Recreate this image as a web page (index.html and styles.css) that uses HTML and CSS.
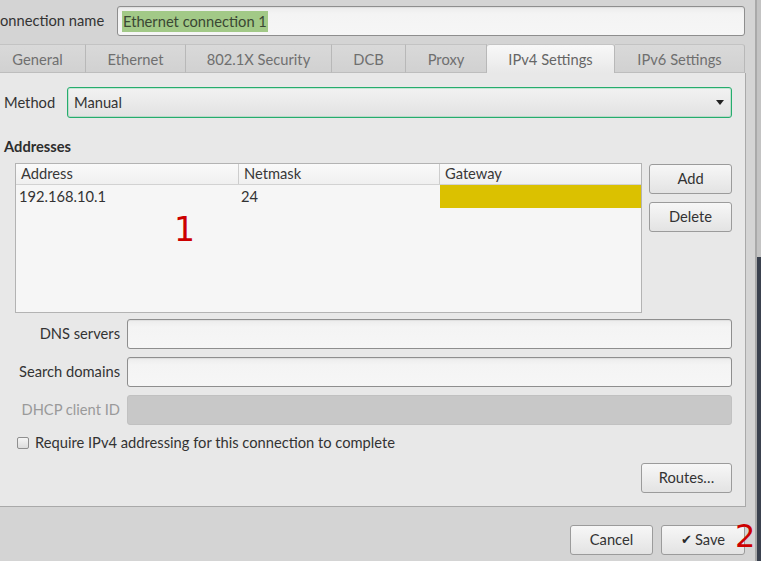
FILE: index.html
```html
<!DOCTYPE html>
<html>
<head>
<meta charset="utf-8">
<link rel="stylesheet" href="styles.css">
</head>
<body>
<div class="screen">
  <div class="dialog">
    <div class="name-row">
      <span class="name-label">onnection name</span>
      <div class="entry name-entry"><span class="sel">Ethernet connection 1</span></div>
    </div>
    <div class="tabs">
      <div class="tab t-general">General</div>
      <div class="tab t-ethernet">Ethernet</div>
      <div class="tab t-security">802.1X Security</div>
      <div class="tab t-dcb">DCB</div>
      <div class="tab t-proxy">Proxy</div>
      <div class="tab t-ipv4 active">IPv4 Settings</div>
      <div class="tab t-ipv6">IPv6 Settings</div>
    </div>
    <div class="panel">
      <div class="method-row">
        <span class="label">Method</span>
        <div class="combo"><span class="combo-text">Manual</span><span class="arrow"></span></div>
      </div>
      <div class="section">Addresses</div>
      <div class="addr-row">
        <div class="table">
          <div class="thead">
            <div class="th">Address</div>
            <div class="th sep">Netmask</div>
            <div class="th sep">Gateway</div>
          </div>
          <div class="trow">
            <div class="td">192.168.10.1</div>
            <div class="td">24</div>
            <div class="td gw"></div>
          </div>
          <span class="mark mark1">1</span>
        </div>
        <div class="side-buttons">
          <button class="btn side-btn">Add</button>
          <button class="btn side-btn">Delete</button>
        </div>
      </div>
      <div class="form-grid">
        <span class="form-label">DNS servers</span>
        <div class="entry"></div>
        <span class="form-label">Search domains</span>
        <div class="entry"></div>
        <span class="form-label disabled">DHCP client ID</span>
        <div class="entry entry-disabled"></div>
      </div>
      <div class="check-row">
        <span class="checkbox"></span>
        <span>Require IPv4 addressing for this connection to complete</span>
      </div>
      <div class="routes-row">
        <button class="btn routes-btn">Routes…</button>
      </div>
    </div>
    <div class="actions">
      <button class="btn cancel-btn">Cancel</button>
      <button class="btn save-btn"><span class="check">✔</span>Save</button>
      <span class="mark mark2">2</span>
    </div>
  </div>
  <div class="desktop"></div>
</div>
</body>
</html>
```
FILE: styles.css
```css
html, body {
  margin: 0;
  padding: 0;
}
body {
  width: 761px;
  height: 561px;
  overflow: hidden;
  background: #d4d4d4;
  font-family: Lato, "Open Sans", sans-serif;
  font-size: 14.7px;
  color: #333333;
}
.screen {
  display: flex;
  height: 561px;
}
.dialog {
  flex: none;
  width: 765px;
  margin-left: -10px;
  background: #d4d4d4;
  border-right: 2px solid #a9a9a9;
  display: flex;
  flex-direction: column;
}
.desktop {
  flex: 1;
  background: linear-gradient(#c3c3c3 0, #c3c3c3 257px, #3a414e 257px);
}

/* name row */
.name-row {
  display: grid;
  grid-template-columns: 117px 1fr;
  align-items: center;
  padding: 6px 10px 0 10px;
}
.name-label {
  color: #333;
  line-height: 20px;
  padding-bottom: 2px;
}
.entry {
  box-sizing: border-box;
  height: 30px;
  border: 1px solid #8e8e8e;
  border-radius: 3px;
  background: linear-gradient(#ececec, #f4f4f4 7px, #f6f6f6);
  box-shadow: inset 0 1px 1px rgba(0, 0, 0, 0.06);
}
.name-entry {
  display: flex;
  align-items: center;
  padding-left: 4px;
}
.sel {
  background: #a2c987;
  color: #3a4733;
  line-height: 20px;
  padding: 0 1px 1px;
}

/* tabs */
.tabs {
  display: flex;
  margin-top: 8px;
  height: 29px;
  width: 755px;
}
.tab {
  box-sizing: border-box;
  height: 29px;
  display: flex;
  align-items: center;
  justify-content: center;
  color: #6f6f6f;
  background: linear-gradient(#d9d9d9, #d1d1d1);
  border-top: 1px solid #c3c3c3;
  border-right: 1px solid #b8b8b8;
  border-bottom: 1px solid #bdbdbd;
}
.t-general { width: 96px; }
.t-ethernet { width: 100px; }
.t-security { width: 146px; }
.t-dcb { width: 74px; }
.t-proxy { width: 81px; }
.t-ipv4 { width: 128px; }
.t-ipv6 { width: 130px; border-top-right-radius: 3px; }
.tab.active {
  background: linear-gradient(#f8f8f8, #ededed 70%, #e8e8e8);
  border-top-color: #c4c4c4;
  border-bottom: none;
  border-radius: 3px 3px 0 0;
  padding-bottom: 1px;
  color: #666;
}

/* panel */
.panel {
  box-sizing: border-box;
  width: 756px;
  background: #e8e8e8;
  border-right: 1px solid #a9a9a9;
  border-bottom: 1px solid #a9a9a9;
  padding: 14px 13px 13px 14px;
}
.method-row {
  display: grid;
  grid-template-columns: 63px 1fr;
  align-items: center;
}
.label {
  line-height: 20px;
  padding-bottom: 1px;
}
.combo {
  box-sizing: border-box;
  height: 31px;
  display: flex;
  align-items: center;
  justify-content: space-between;
  padding: 0 7px 1px 6px;
  border: 1px solid #25ad6d;
  border-radius: 3px;
  background: linear-gradient(#f2f2f2, #e2e2e2);
  box-shadow: inset 0 0 0 1px rgba(40, 180, 110, 0.22);
}
.arrow {
  width: 0;
  height: 0;
  border-left: 4px solid transparent;
  border-right: 4px solid transparent;
  border-top: 5px solid #222;
}
.section {
  margin: 19px 0 6px;
  line-height: 19px;
  padding-bottom: 1px;
  font-weight: 700;
  color: #2d2d2d;
}
.addr-row {
  display: flex;
  gap: 7px;
  padding-left: 11px;
}
.table {
  position: relative;
  box-sizing: border-box;
  width: 627px;
  height: 150px;
  border: 1px solid #b3b3b3;
  background: #f6f6f6;
}
.thead, .trow {
  display: grid;
  grid-template-columns: 222px 201px 1fr;
}
.thead {
  height: 20px;
  background: linear-gradient(#fafafa, #f0f0f0);
  border-bottom: 1px solid #d2d2d2;
}
.th {
  line-height: 18px;
  padding-left: 5px;
  color: #383838;
}
.th.sep {
  border-left: 1px solid #cdcdcd;
}
.trow {
  height: 23px;
}
.td {
  line-height: 22px;
  padding-left: 3px;
  color: #333;
}
.gw {
  background: #dbc100;
  margin-left: 1px;
}
.mark {
  position: absolute;
  font-family: "DejaVu Sans", sans-serif;
  color: #cc0000;
}
.mark1 {
  left: 158px;
  top: 49px;
  font-size: 33px;
  line-height: 33px;
}
.side-buttons {
  display: flex;
  flex-direction: column;
  gap: 8px;
  margin-top: 1px;
}
.btn {
  box-sizing: border-box;
  height: 30px;
  padding: 0 0 2px;
  border: 1px solid #9b9b9b;
  border-radius: 3px;
  background: linear-gradient(#f7f7f7, #e3e3e3);
  font-family: inherit;
  font-size: 14.7px;
  color: #333;
}
.side-btn {
  width: 83px;
}
.form-grid {
  display: grid;
  grid-template-columns: 105px 1fr;
  column-gap: 7px;
  row-gap: 8px;
  align-items: center;
  margin-top: 6px;
  padding-left: 11px;
}
.form-label {
  text-align: right;
  line-height: 20px;
  padding-bottom: 2px;
}
.form-label.disabled {
  color: #9a9a9a;
}
.entry-disabled {
  background: #c8c8c8;
  border-color: #c1c1c1;
  box-shadow: none;
}
.check-row {
  display: flex;
  align-items: center;
  gap: 6px;
  height: 20px;
  margin-top: 8px;
  padding-left: 13px;
}
.check-row span:last-child {
  padding-bottom: 2px;
}
.checkbox {
  box-sizing: border-box;
  width: 12px;
  height: 12px;
  border: 1px solid #8f8f8f;
  border-radius: 2px;
  background: linear-gradient(#f5f5f5, #dcdcdc);
}
.routes-row {
  display: flex;
  justify-content: flex-end;
  margin-top: 10px;
}
.routes-btn {
  width: 91px;
}

/* actions */
.actions {
  position: relative;
  display: flex;
  justify-content: flex-end;
  gap: 8px;
  padding: 18px 10px 0 0;
}
.cancel-btn {
  width: 83px;
}
.save-btn {
  width: 84px;
  display: flex;
  align-items: center;
  justify-content: center;
  gap: 3px;
}
.check {
  font-family: "DejaVu Sans", sans-serif;
  font-size: 13px;
  font-weight: 700;
  color: #2a2a2a;
}
.mark2 {
  left: 745px;
  top: 13px;
  font-size: 32px;
  line-height: 32px;
}
```
